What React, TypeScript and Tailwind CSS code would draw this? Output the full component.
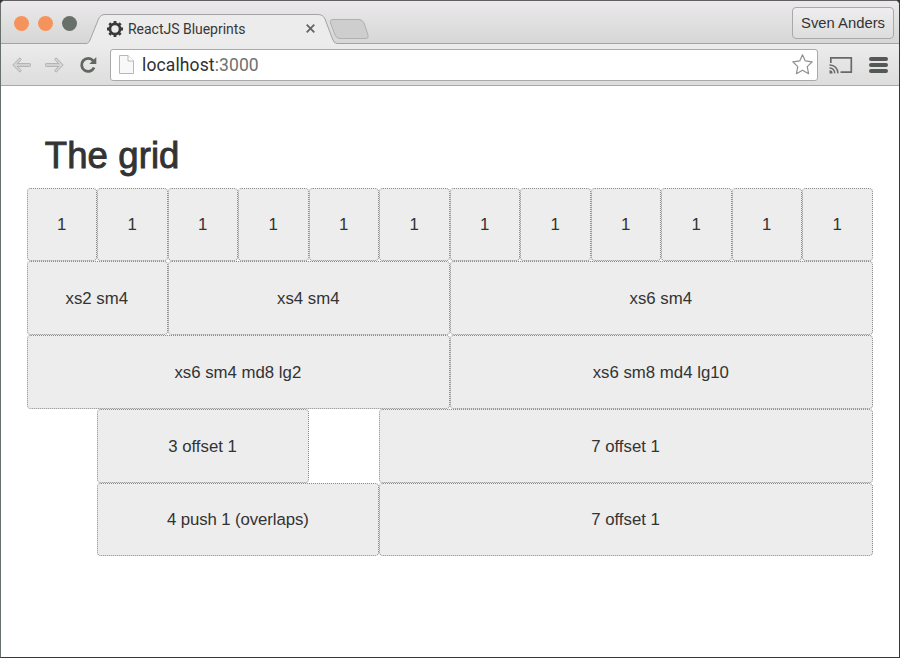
import React from "react";

type CellData = { text: string; span: string };

const rows: CellData[][] = [
  Array.from({ length: 12 }, () => ({ text: "1", span: "col-span-1" })),
  [
    { text: "xs2 sm4", span: "col-span-2" },
    { text: "xs4 sm4", span: "col-span-4" },
    { text: "xs6 sm4", span: "col-span-6" },
  ],
  [
    { text: "xs6 sm4 md8 lg2", span: "col-span-6" },
    { text: "xs6 sm8 md4 lg10", span: "col-span-6" },
  ],
  [
    { text: "3 offset 1", span: "col-start-2 col-span-3" },
    { text: "7 offset 1", span: "col-start-6 col-span-7" },
  ],
  [
    { text: "4 push 1 (overlaps)", span: "col-start-2 col-span-4 tracking-[-0.1px]" },
    { text: "7 offset 1", span: "col-start-6 col-span-7" },
  ],
];

function Gear() {
  return (
    <svg className="size-4 shrink-0" viewBox="0 0 16 16" fill="none" stroke="#383a38">
      <circle cx="8" cy="8" r="5.1" strokeWidth="2.8" />
      {[0, 45, 90, 135, 180, 225, 270, 315].map((a) => (
        <path key={a} d="M8 2.8V0" strokeWidth="2.8" transform={`rotate(${a} 8 8)`} />
      ))}
    </svg>
  );
}

function Arrow({ flip = false }: { flip?: boolean }) {
  return (
    <svg
      className={flip ? "h-4 w-[19px] -scale-x-100" : "h-4 w-[19px]"}
      viewBox="0 0 19 16"
      fill="#d4d4d4"
      stroke="#b0b0b0"
      strokeWidth="1"
      strokeLinejoin="round"
    >
      <path d="M.8 8 7.800.8 9.300 2.500 5.300 6.600H17.800q.8 0 .8.800v1.200q0 .8-.8.800H5.300l4 4.100L7.800 15.200Z" />
    </svg>
  );
}

function TabStrip() {
  return (
    <div className="relative flex h-[43px] w-full items-start bg-linear-to-b from-[#ebe9eb] to-[#d6d6d6]">
      <svg className="absolute left-0 top-0 h-[43px] w-[898px]" viewBox="1 1 898 43" fill="none">
        <path
          d="M1 45V43.5H86C88 43.5 89 42.5 90 40L98.5 19Q100.5 14.5 105 14.5H318Q323 14.5 325 19L332.5 39Q334 43.5 337 43.5H899V45Z"
          fill="#ececec"
        />
        <path
          d="M1 43.5H86C88 43.5 89 42.5 90 40L98.5 19Q100.5 14.5 105 14.5H318Q323 14.5 325 19L332.5 39Q334 43.5 337 43.5H899"
          stroke="#a3a3a3"
        />
        <path
          d="M333 19.5H359Q362.500 19.500 364 23L368 35Q369 38.500 366 38.500H340Q336.500 38.500 335 35L330.500 23Q329.500 19.500 333 19.500Z"
          fill="#cecece"
          stroke="#b0b0b0"
        />
      </svg>
      <div className="flex h-11 w-[92px] items-center gap-[9px] pl-[13px]">
        <i className="size-[15px] rounded-full bg-[#f4935c]" />
        <i className="size-[15px] rounded-full bg-[#f4935c]" />
        <i className="size-[15px] rounded-full bg-[#69706a]" />
      </div>
      <div className="relative flex h-[29px] w-[235px] items-center self-end pb-[2px] pl-[14px]">
        <Gear />
        <span className="ml-[5px] whitespace-nowrap pt-[2px] font-['Roboto',sans-serif] text-[14px] tracking-[-0.02px] text-[#383838]">
          ReactJS Blueprints
        </span>
        <svg className="ml-auto mr-[13px] size-[9px]" viewBox="0 0 9 9" stroke="#646464" strokeWidth="1.8">
          <path d="m.7.7 7.600 7.600M8.300.7.7 8.300" />
        </svg>
      </div>
      <button className="relative ml-auto mr-[5px] mt-[6px] flex h-[32px] w-[102px] items-center justify-center whitespace-nowrap rounded-[4px] border border-[#a9a9a9] bg-linear-to-b from-[#eeeeee] to-[#dddddd] text-[14.8px] text-[#333]">
        Sven Anders
      </button>
    </div>
  );
}

function Toolbar() {
  return (
    <div className="flex h-[42px] items-center border-b border-[#a8a8a8] bg-linear-to-b from-[#ececec] to-[#dddddd] pl-[11px] pr-[11px]">
      <Arrow />
      <span className="ml-[14px] flex">
        <Arrow flip />
      </span>
      <svg className="ml-[15px] size-[18px]" viewBox="0 0 18 18" fill="none">
        <path d="M14.200 4.800A6.500 6.500 0 1 0 15.100 11.500" stroke="#626762" strokeWidth="2.800" />
        <path d="M17.300 1V8H10.300Z" fill="#626762" />
      </svg>
      <div className="ml-[13px] flex h-[32px] w-[708px] items-center rounded-[3px] border border-[#aaa] bg-white pl-[8px] pr-[4px]">
        <svg className="h-[19px] w-[15px]" viewBox="0 0 15 19" stroke="#b8b8b8" fill="#f8f8f8">
          <path d="M.5.5H9L14.500 6V18.500H.5Z" />
          <path d="M9 .5V6H14.500" fill="#fff" />
        </svg>
        <span className="ml-2 whitespace-nowrap pt-px font-['Roboto',sans-serif] text-[17.500px] tracking-[0.12px] text-[#303030]">
          localhost<span className="text-[#707070]">:3000</span>
        </span>
        <svg className="ml-auto size-[21px]" viewBox="0 0 21 21" fill="#fff" stroke="#919191" strokeWidth="1.200" strokeLinejoin="round">
          <path d="M10.500.8 13.300 6.900 20.200 7.800 15.200 12.600 16.600 19.700 10.500 16.200 4.400 19.700 5.800 12.600.8 7.800 7.700 6.900Z" />
        </svg>
      </div>
      <svg className="ml-[11px] h-[18px] w-[24px]" viewBox="0 0 24 18" fill="none" stroke="#676b67">
        <path d="M1.800 7V1.800H22.300V16.200H11.500" strokeWidth="1.700" />
        <path d="M.5 9A8 8 0 0 1 8.900 17.400M.5 12A5 5 0 0 1 5.700 17.400" strokeWidth="1.500" />
        <path d="M.5 14.200A3 3 0 0 1 3.500 17.500H.5Z" fill="#676b67" stroke="none" />
      </svg>
      <div className="ml-auto flex flex-col gap-[2px]">
        <i className="h-[4px] w-[19px] rounded-full bg-[#555955]" />
        <i className="h-[4px] w-[19px] rounded-full bg-[#555955]" />
        <i className="h-[4px] w-[19px] rounded-full bg-[#555955]" />
      </div>
    </div>
  );
}

export default function App() {
  return (
    <div className="h-[658px] w-[900px] bg-[#333333] font-['Liberation_Sans',Arial,sans-serif]">
      <div className="flex h-full flex-col overflow-hidden rounded-t-[5px] border border-b-[#383838] border-l-[#69706a] border-r-[#383838] border-t-[#606060] bg-white">
        <TabStrip />
        <Toolbar />
        <main className="px-[25.8px] pt-[48px] text-[#333]">
          <h1 className="h-[53.500px] pl-[18px] text-[36.5px] leading-[44px] tracking-[0.1px] [-webkit-text-stroke:0.9px_#333]">
            The grid
          </h1>
          <div className="flex w-[846px] flex-col">
            {rows.map((row, i) => (
              <div key={i} className="grid h-[73.8px] grid-cols-12">
                {row.map((cell, j) => (
                  <div
                    key={j}
                    className={`${cell.span} flex items-center justify-center whitespace-nowrap rounded-[4px] border border-dotted border-[#8c8c8c] bg-[#ededed] pr-px pt-px text-[16.8px]`}
                  >
                    {cell.text}
                  </div>
                ))}
              </div>
            ))}
          </div>
        </main>
      </div>
    </div>
  );
}
